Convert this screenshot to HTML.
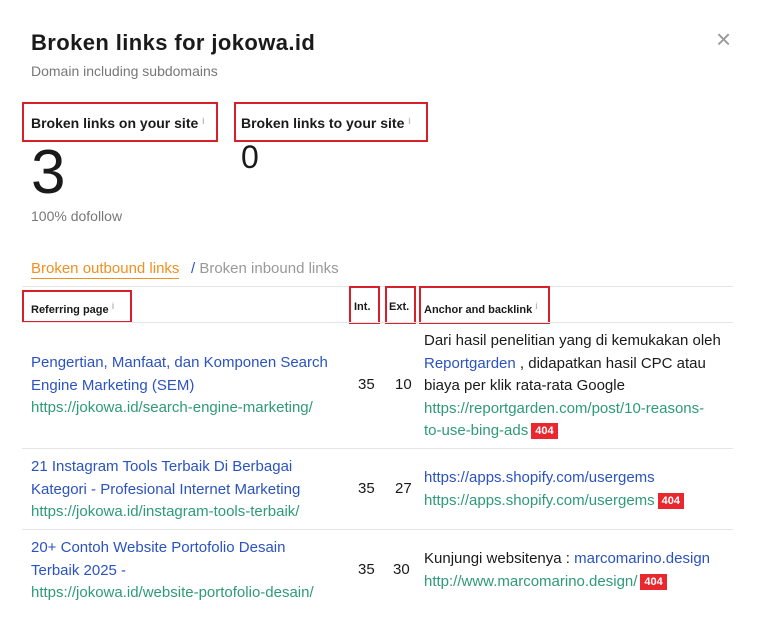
<!DOCTYPE html>
<html><head><meta charset="utf-8"><style>
body{margin:0;width:765px;height:641px;background:#fff;font-family:"Liberation Sans",sans-serif;color:#1a1a1a;position:relative;overflow:hidden}
.a{position:absolute;white-space:nowrap}
.b{color:#2b53c0}.g{color:#2e9a78}
.box{position:absolute;border:2px solid #d8202a;box-sizing:border-box}
.hl{position:absolute;left:22px;width:711px;height:1px;background:#e6e6e6}
.t{font-size:15px;line-height:22.5px}
.bad{display:inline-block;background:#e8282e;color:#fff;font-size:11px;font-weight:bold;line-height:16px;padding:0 4px;vertical-align:1px;margin-left:3px}
.h{font-size:11px;font-weight:bold}
.i{color:#bbb;font-size:9px;vertical-align:4px}
</style></head><body>
<div class="a" style="left:31px;top:30px;font-size:22px;font-weight:bold;letter-spacing:0.4px">Broken links for jokowa.id</div>
<div class="a" style="left:31px;top:63px;font-size:14px;color:#777">Domain including subdomains</div>
<div class="a" style="left:716px;top:24px;font-size:26px;color:#999">×</div>
<div class="box" style="left:22px;top:102px;width:196px;height:40px"></div>
<div class="a" style="left:31px;top:115px;font-size:14px;font-weight:bold">Broken links on your site <span class="i">i</span></div>
<div class="box" style="left:234px;top:102px;width:194px;height:40px"></div>
<div class="a" style="left:241px;top:115px;font-size:14px;font-weight:bold">Broken links to your site <span class="i">i</span></div>
<div class="a" style="left:31px;top:138px;font-size:62px;line-height:70px">3</div>
<div class="a" style="left:241px;top:139px;font-size:32px;line-height:36px">0</div>
<div class="a" style="left:31px;top:208px;font-size:14px;color:#777">100% dofollow</div>
<div class="a" style="left:31px;top:260px;font-size:15px;color:#f0901e;border-bottom:1px solid #f0901e;padding-bottom:1px">Broken outbound links</div>
<div class="a" style="left:191px;top:260px;font-size:15px;color:#999"><span style="color:#2b53c0">/</span> Broken inbound links</div>
<div class="hl" style="top:286px"></div>
<div class="box" style="left:22px;top:290px;width:110px;height:33px"></div>
<div class="a h" style="left:31px;top:301px">Referring page <span class="i">i</span></div>
<div class="box" style="left:349px;top:286px;width:31px;height:38px"></div>
<div class="a h" style="left:354px;top:301px">Int.</div>
<div class="box" style="left:385px;top:286px;width:31px;height:38px"></div>
<div class="a h" style="left:389px;top:301px">Ext.</div>
<div class="box" style="left:419px;top:286px;width:131px;height:38px"></div>
<div class="a h" style="left:424px;top:301px">Anchor and backlink <span class="i">i</span></div>
<div class="hl" style="top:322px"></div>
<div class="a t" style="left:31px;top:352px"><span class="b">Pengertian, Manfaat, dan Komponen Search<br>Engine Marketing (SEM)</span><br><span class="g">https://jokowa.id/search-engine-marketing/</span></div>
<div class="a t" style="left:358px;top:374px">35</div><div class="a t" style="left:395px;top:374px">10</div>
<div class="a t" style="left:424px;top:330px">Dari hasil penelitian yang di kemukakan oleh<br><span class="b">Reportgarden</span> , didapatkan hasil CPC atau<br>biaya per klik rata-rata Google<br><span class="g">https://reportgarden.com/post/10-reasons-<br>to-use-bing-ads</span><span class="bad">404</span></div>
<div class="hl" style="top:448px"></div>
<div class="a t" style="left:31px;top:456px"><span class="b">21 Instagram Tools Terbaik Di Berbagai<br>Kategori - Profesional Internet Marketing</span><br><span class="g">https://jokowa.id/instagram-tools-terbaik/</span></div>
<div class="a t" style="left:358px;top:478px">35</div><div class="a t" style="left:395px;top:478px">27</div>
<div class="a t" style="left:424px;top:467px"><span class="b">https://apps.shopify.com/usergems</span><br><span class="g">https://apps.shopify.com/usergems</span><span class="bad">404</span></div>
<div class="hl" style="top:529px"></div>
<div class="a t" style="left:31px;top:537px"><span class="b">20+ Contoh Website Portofolio Desain<br>Terbaik 2025 -</span><br><span class="g">https://jokowa.id/website-portofolio-desain/</span></div>
<div class="a t" style="left:358px;top:559px">35</div><div class="a t" style="left:393px;top:559px">30</div>
<div class="a t" style="left:424px;top:548px">Kunjungi websitenya : <span class="b">marcomarino.design</span><br><span class="g">http://www.marcomarino.design/</span><span class="bad">404</span></div>
</body></html>
